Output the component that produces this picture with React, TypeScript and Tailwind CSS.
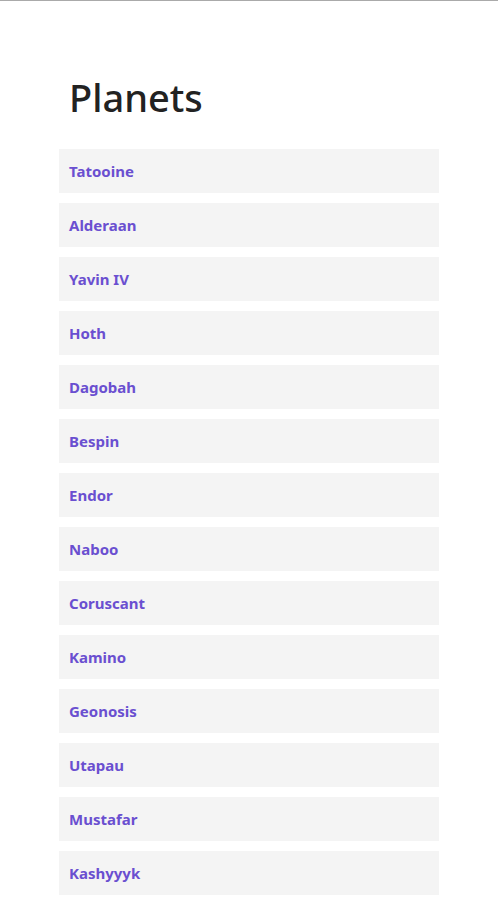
const planets = [
  'Tatooine',
  'Alderaan',
  'Yavin IV',
  'Hoth',
  'Dagobah',
  'Bespin',
  'Endor',
  'Naboo',
  'Coruscant',
  'Kamino',
  'Geonosis',
  'Utapau',
  'Mustafar',
  'Kashyyyk',
]

export default function App() {
  return (
    <div className="min-h-screen border-t border-[#aaaaaa] bg-white" style={{ fontFamily: '"Noto Sans", "Open Sans", sans-serif' }}>
      <div className="mx-auto w-[380px] pt-[72px]">
        <h1 className="pl-[10px] text-[38px] leading-[48px] font-medium text-[#222222]">Planets</h1>
        <ul className="mt-[28px] flex flex-col gap-[10px]">
          {planets.map((p) => (
            <li key={p} className="flex h-[44px] items-center bg-[#f4f4f4] px-[10px] text-[15px] font-bold text-[#6a4fd0]">
              {p}
            </li>
          ))}
        </ul>
      </div>
    </div>
  )
}
